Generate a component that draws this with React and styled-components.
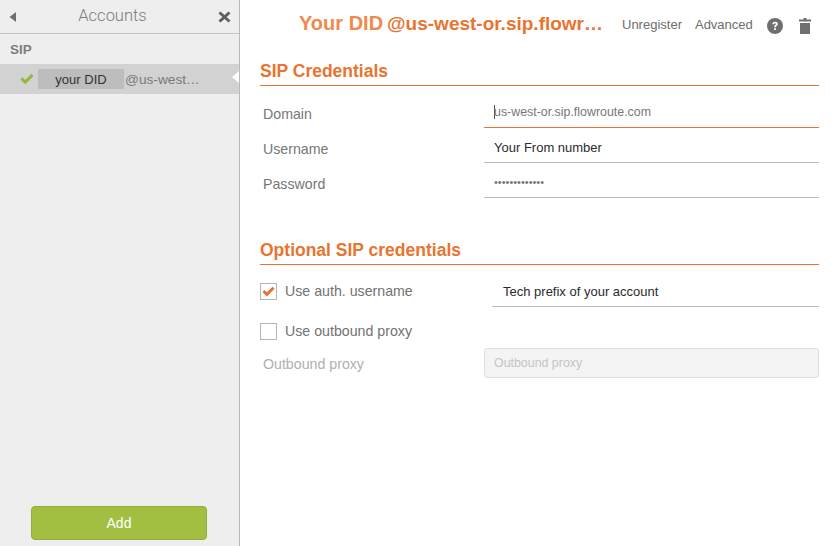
import React from "react";
import styled, { createGlobalStyle } from "styled-components";

const Global = createGlobalStyle`
  html, body { margin: 0; padding: 0; height: 100%; background: #fff; }
  body { font-family: "Liberation Sans", Arial, sans-serif; overflow: hidden; }
  #root { height: 100%; }
`;

const orange = "#e8742f";

const Page = styled.div`
  display: flex;
  width: 838px;
  height: 546px;
`;

const Sidebar = styled.aside`
  width: 239px;
  flex: none;
  display: flex;
  flex-direction: column;
  background: #eeeeee;
  border-right: 1px solid #b9b9b9;
`;

const SideHead = styled.div`
  height: 33px;
  display: flex;
  align-items: center;
  justify-content: space-between;
  padding: 0 8px 0 9px;
  border-bottom: 1px solid #c4c4c4;
`;

const SideTitle = styled.div`
  font-family: Roboto, "Liberation Sans", sans-serif;
  font-size: 16.5px;
  font-weight: 300;
  color: #7c7c7c;
  margin: 0 9px 2px 0;
`;

const GroupLabel = styled.div`
  height: 29px;
  padding: 1px 0 0 10px;
  display: flex;
  align-items: center;
  font-size: 13.5px;
  font-weight: 700;
  color: #7d7d7d;
`;

const AccountRow = styled.div`
  position: relative;
  height: 30px;
  display: flex;
  align-items: center;
  padding-left: 20px;
  background: #d2d2d2;
  font-size: 13.7px;
  color: #7a7a7a;
`;

const DidMask = styled.span`
  width: 86px;
  height: 20px;
  margin: 0 1px 0 4px;
  background: #bdbdbd;
  color: #333;
  font-size: 13px;
  display: flex;
  align-items: center;
  justify-content: center;
`;

const RowPointer = styled.span`
  position: absolute;
  right: 0;
  top: 7px;
  width: 0;
  height: 0;
  border-top: 6px solid transparent;
  border-bottom: 6px solid transparent;
  border-right: 7px solid #fff;
`;

const SideSpacer = styled.div`
  flex: 1;
`;

const AddButton = styled.button`
  display: block;
  width: 176px;
  height: 34px;
  margin: 0 0 6px 31px;
  padding: 0;
  border: 1px solid #92ad38;
  border-radius: 4px;
  background: #a3bf42;
  color: #fff;
  font: 400 14px "Liberation Sans", Arial, sans-serif;
`;

const Main = styled.main`
  flex: 1;
  display: flex;
  flex-direction: column;
  padding: 0 19px 0 20px;
  min-width: 0;
`;

const TopBar = styled.header`
  height: 46px;
  display: flex;
  align-items: center;
  padding-left: 39px;
`;

const Title = styled.h1`
  margin: 0;
  width: 307px;
  flex: none;
  font-size: 19px;
  font-weight: 700;
  color: ${orange};
  white-space: nowrap;
`;

const TitleDid = styled.span`
  color: #f08a4c;
  font-size: 20px;
  margin-right: 4px;
`;

const TopLink = styled.span`
  font-size: 13px;
  color: #6e6e6e;
  margin: 2px 0 0 ${(p) => p.$gap}px;
  white-space: nowrap;
`;

const IconSlot = styled.span`
  display: flex;
  margin: 6px 0 0 ${(p) => p.$gap}px;
`;

const Section = styled.section`
  margin-top: ${(p) => p.$top}px;
`;

const SectionTitle = styled.h2`
  margin: 0 0 ${(p) => p.$after || 0}px;
  height: 26px;
  line-height: 24px;
  border-bottom: 1px solid ${orange};
  font-size: 17.5px;
  font-weight: 700;
  color: ${orange};
`;

const FormRow = styled.div`
  display: grid;
  grid-template-columns: 224px 1fr;
  height: ${(p) => p.$h || 35}px;
  align-items: center;
`;

const FieldLabel = styled.label`
  padding-left: 3px;
  margin-top: ${(p) => (p.$muted ? 2 : 6)}px;
  font-size: 14.2px;
  color: ${(p) => (p.$muted ? "#b0b0b0" : "#777")};
`;

const Field = styled.div`
  height: 100%;
  box-sizing: border-box;
  display: flex;
  align-items: center;
  padding: 4px 0 0 10px;
  border-bottom: 1px solid ${(p) => (p.$focus ? orange : "#bdbdbd")};
  font-size: ${(p) => p.$size || 13}px;
  color: ${(p) => (p.$dim ? "#777" : "#2b2b2b")};
`;

const Caret = styled.span`
  width: 1px;
  height: 14px;
  background: #555;
  margin-right: -1px;
`;

const CheckLabel = styled.label`
  display: flex;
  align-items: center;
  gap: 8px;
  margin-top: ${(p) => p.$shift}px;
  font-size: 14.2px;
  color: #727272;
`;

const Box = styled.span`
  width: 15px;
  height: 15px;
  border: 1px solid #b5b5b5;
  background: #fff;
  display: flex;
  align-items: center;
  justify-content: center;
`;

const PrefixField = styled(Field)`
  margin-left: 8px;
  padding: 12px 0 0 11px;
`;

const DisabledField = styled.div`
  height: 28px;
  display: flex;
  align-items: center;
  padding-left: 9px;
  border: 1px solid #dcdcdc;
  border-radius: 3px;
  background: #f4f4f4;
  font-size: 12.4px;
  color: #c4c4c4;
`;

const Check = ({ color, size }) => (
  <svg width={size} height={size} viewBox="0 0 16 16">
    <path d="M0.5 8.5 L6 14 L15.5 4.5 L13 2 L6 9 L3 6 Z" fill={color} />
  </svg>
);

export default function App() {
  return (
    <Page>
      <Global />
      <Sidebar>
        <SideHead>
          <svg width="7" height="10" viewBox="0 0 7 10">
            <path d="M7 0 V10 L0.5 5 Z" fill="#6f6f6f" />
          </svg>
          <SideTitle>Accounts</SideTitle>
          <svg width="13" height="12" viewBox="0 0 13 12">
            <path d="M1.5 1.5 L11.5 10.5 M11.5 1.5 L1.5 10.5" stroke="#5f5f5f" strokeWidth="3" />
          </svg>
        </SideHead>
        <GroupLabel>SIP</GroupLabel>
        <AccountRow>
          <Check color="#93b83a" size={14} />
          <DidMask>your DID</DidMask>
          @us-west…
          <RowPointer />
        </AccountRow>
        <SideSpacer />
        <AddButton>Add</AddButton>
      </Sidebar>
      <Main>
        <TopBar>
          <Title>
            <TitleDid>Your DID</TitleDid>@us-west-or.sip.flowr…
          </Title>
          <TopLink $gap={16}>Unregister</TopLink>
          <TopLink $gap={13}>Advanced</TopLink>
          <IconSlot $gap={14}>
            <svg width="16" height="16" viewBox="0 0 16 16">
              <circle cx="8" cy="8" r="8" fill="#6f6f6f" />
              <path d="M5.4 6.2 C5.5 4.6 6.6 3.8 8.1 3.8 C9.7 3.8 10.8 4.7 10.8 6 C10.8 7.6 8.9 7.8 8.9 9.3 H7.1 C7.1 7.2 8.9 7.2 8.9 6.1 C8.9 5.6 8.6 5.3 8 5.3 C7.4 5.3 7.1 5.7 7.1 6.3 Z" fill="#fff" />
              <rect x="7.1" y="10.2" width="1.8" height="1.8" fill="#fff" />
            </svg>
          </IconSlot>
          <IconSlot $gap={16}>
            <svg width="12" height="16" viewBox="0 0 12 16">
              <path d="M4.5 0 H7.5 V1.5 H12 V3.5 H0 V1.5 H4.5 Z" fill="#6f6f6f" />
              <path d="M1 5 H11 V16 H1 Z" fill="#6f6f6f" />
            </svg>
          </IconSlot>
        </TopBar>
        <Section $top={13}>
          <SectionTitle $after={7}>SIP Credentials</SectionTitle>
          <FormRow>
            <FieldLabel>Domain</FieldLabel>
            <Field $focus $dim $size={12.4}>
              <Caret />
              us-west-or.sip.flowroute.com
            </Field>
          </FormRow>
          <FormRow>
            <FieldLabel>Username</FieldLabel>
            <Field>Your From number</Field>
          </FormRow>
          <FormRow>
            <FieldLabel>Password</FieldLabel>
            <Field $dim $size={11}>•••••••••••••</Field>
          </FormRow>
        </Section>
        <Section $top={40}>
          <SectionTitle>Optional SIP credentials</SectionTitle>
          <FormRow $h={42}>
            <CheckLabel $shift={10}>
              <Box>
                <Check color={orange} size={13} />
              </Box>
              Use auth. username
            </CheckLabel>
            <PrefixField>Tech prefix of your account</PrefixField>
          </FormRow>
          <FormRow $h={41}>
            <CheckLabel $shift={7}>
              <Box />
              Use outbound proxy
            </CheckLabel>
          </FormRow>
          <FormRow $h={30}>
            <FieldLabel $muted>Outbound proxy</FieldLabel>
            <DisabledField>Outbound proxy</DisabledField>
          </FormRow>
        </Section>
      </Main>
    </Page>
  );
}
